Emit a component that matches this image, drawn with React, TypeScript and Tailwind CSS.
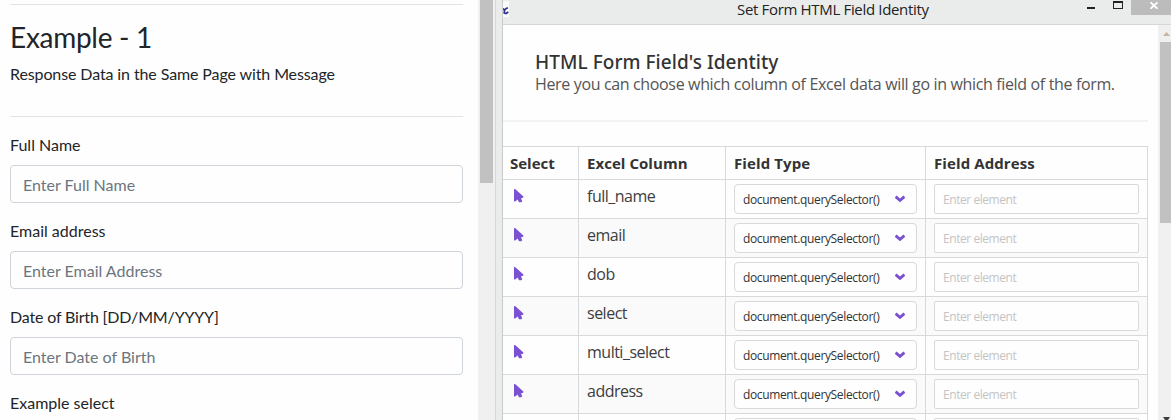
const fields = [
  { label: 'Full Name', placeholder: 'Enter Full Name' },
  { label: 'Email address', placeholder: 'Enter Email Address' },
  { label: 'Date of Birth [DD/MM/YYYY]', placeholder: 'Enter Date of Birth' },
];

const columns = ['full_name', 'email', 'dob', 'select', 'multi_select', 'address'];

const grid = 'grid grid-cols-[76px_147px_200px_222px]';

function PointerIcon() {
  return (
    <svg width="10" height="14" viewBox="0 0 10 14" fill="#7a52d1">
      <path d="M0 0 L1.4 0.2 L9.4 7.4 L9.2 8.8 L7 9.2 L8.2 12.2 L7.4 13.2 L5 13.2 L3.6 10.4 L1.6 12.2 L0 12.4 Z" />
    </svg>
  );
}

function ChevronIcon() {
  return (
    <svg width="10" height="8" viewBox="0 0 10 8" fill="none" stroke="#7a52d1" strokeWidth="2.8">
      <path d="M0.6 1.6 L5 5.4 L9.4 1.6" />
    </svg>
  );
}

function ExamplePage() {
  return (
    <section className="w-[478px] shrink-0 bg-[#fefefe] pl-[10px] pr-[15px] font-['Lato',sans-serif] text-[16px] leading-6 text-[#212529]">
      <div className="mt-1 h-px bg-[#e3e3e3]" />
      <h1 className="mt-[15px] text-[28px] leading-[34px] tracking-[-0.28px]">Example - 1</h1>
      <p className="mt-[8px] tracking-[-0.11px]">Response Data in the Same Page with Message</p>
      <div className="mt-[30px] h-px bg-[#e3e3e3]" />
      <form className="mt-4 flex flex-col">
        {fields.map((f) => (
          <label key={f.label} className="flex h-[86px] flex-col gap-2">
            <span className={f.label.length > 20 ? 'tracking-[-0.17px]' : ''}>{f.label}</span>
            <input
              placeholder={f.placeholder}
              className="h-[38px] w-full rounded border border-[#ced4da] bg-transparent px-3 placeholder:text-[#6c757d]"
            />
          </label>
        ))}
        <span>Example select</span>
      </form>
    </section>
  );
}

function TitleBar() {
  return (
    <header className="flex h-[25px] shrink-0 border-b border-[#d7d7d7] bg-[#eaecec]">
      <svg width="6" height="17" viewBox="0 0 6 17" className="shrink-0">
        <path d="M0 1h6v16H0z" fill="#fcfcfc" />
        <path d="M5 8 L3.5 8.2 L1.5 10.2 L0 8.6 M1.5 10.5 L1.2 13 L3 13.5 L5.3 12" fill="none" stroke="#2b2f8f" strokeWidth="1.7" />
      </svg>
      <h2 className="ml-[228px] w-[350px] text-[15px] leading-[19px] tracking-[-0.33px] text-[#222]">
        Set Form HTML Field Identity
      </h2>
      <svg width="36" height="12" viewBox="0 0 36 12" className="shrink-0">
        <path d="M0 7h8v2H0z" fill="#222" />
        <path d="M26 1h10v8H26z M27 3v5h8V3z" fill="#222" fillRule="evenodd" />
      </svg>
      <div className="ml-2 flex h-[15px] w-10 bg-[#bcbcbc] pl-[19px] pt-[2px]">
        <svg width="8" height="7" viewBox="0 0 8 7" stroke="#fff" strokeWidth="1.8">
          <path d="M0.5 0.3 L7.5 6.7 M7.5 0.3 L0.5 6.7" />
        </svg>
      </div>
    </header>
  );
}

function FieldTable() {
  return (
    <div className="w-[645px] border-t border-[#d8d9da] text-[#333]">
      <div className={`${grid} h-[33px] border-b border-[#d8d9da] text-[15px] font-bold leading-[33px]`}>
        <span className="border-r border-[#d8d9da] pl-[7px]">Select</span>
        <span className="border-r border-[#d8d9da] pl-2 tracking-[0.05px]">Excel Column</span>
        <span className="border-r border-[#d8d9da] pl-2 tracking-[0.1px]">Field Type</span>
        <span className="border-r border-[#d8d9da] pl-2 tracking-[0.1px]">Field Address</span>
      </div>
      {columns.map((name) => (
        <div key={name} className={`${grid} h-[39px] border-b border-[#d8d9da] even:bg-[#fefefe] odd:bg-[#fafafa]`}>
          <div className="border-r border-[#d8d9da] pl-[11px] pt-[9px]">
            <PointerIcon />
          </div>
          <div className="border-r border-[#d8d9da] pl-2 pt-1 text-[16px] leading-6 tracking-[-0.5px] text-[#3d3d3d]">{name}</div>
          <div className="border-r border-[#d8d9da] px-2 pt-1">
            <button className="flex h-[30px] w-[183px] items-center justify-between rounded border border-[#d8d9da] bg-[#fefefe] pl-2 pr-[11px] text-[12px]">
              <span className="pt-[2px] tracking-[-0.36px]">document.querySelector()</span>
              <ChevronIcon />
            </button>
          </div>
          <div className="border-r border-[#d8d9da] px-2 pt-1">
            <input
              placeholder="Enter element"
              className="h-[30px] w-[205px] rounded-xs border border-[#d8d9da] bg-[#fefefe] px-2 text-[12px] tracking-[-0.44px] placeholder:text-[#c4c4c4]"
            />
          </div>
        </div>
      ))}
      <div className={`${grid} h-[39px]`}>
        <div className="border-r border-[#d8d9da]" />
        <div className="border-r border-[#d8d9da]" />
        <div className="border-r border-[#d8d9da] px-2 pt-1">
          <div className="h-[30px] w-[183px] rounded border border-[#d8d9da]" />
        </div>
        <div className="border-r border-[#d8d9da] px-2 pt-1">
          <div className="h-[30px] w-[205px] rounded-xs border border-[#d8d9da]" />
        </div>
      </div>
    </div>
  );
}

function IdentityWindow() {
  return (
    <section className="flex w-[669px] shrink-0 flex-col border-l border-[#c9cbcb] bg-[#fefefe] font-['Open_Sans',sans-serif]">
      <TitleBar />
      <div className="flex min-h-0 flex-1">
        <main className="w-[655px] shrink-0 overflow-hidden">
          <div className="h-[97px] w-[645px] border-b-2 border-[#f2f3f3] pl-[32px] pt-[25px]">
            <h3 className="font-['Noto_Sans','Open_Sans',sans-serif] text-[19px] font-medium leading-6 tracking-[0.05px] text-[#333]">
              HTML Form Field's Identity
            </h3>
            <p className="whitespace-nowrap text-[16px] leading-[20px] tracking-[-0.35px] text-[#555]">
              Here you can choose which column of Excel data will go in which field of the form.
            </p>
          </div>
          <div className="mt-[24px]">
            <FieldTable />
          </div>
        </main>
        <div className="flex flex-1 flex-col bg-[#f0f0f0] pl-[2px]">
          <svg width="11" height="17" viewBox="0 0 11 17" className="shrink-0">
            <path d="M3 11 L6.5 7 L10 11z" fill="#c9b49e" />
          </svg>
          <div className="h-[181px] bg-[#c1c1c1]" />
          <svg width="11" height="3" viewBox="0 0 11 3" className="mt-auto shrink-0">
            <path d="M3 0h7L8 3H5z" fill="#404040" />
          </svg>
        </div>
      </div>
    </section>
  );
}

export default function App() {
  return (
    <div className="flex h-[420px] w-[1171px] overflow-hidden bg-[#fefefe]">
      <ExamplePage />
      <div className="w-[17px] shrink-0 bg-[#f0f0f0] pl-[2px]">
        <div className="h-[183px] w-[13px] bg-[#c1c1c1]" />
      </div>
      <div className="w-[7px] shrink-0 border-l border-[#d7d7d7] bg-[#eaecec]" />
      <IdentityWindow />
    </div>
  );
}
